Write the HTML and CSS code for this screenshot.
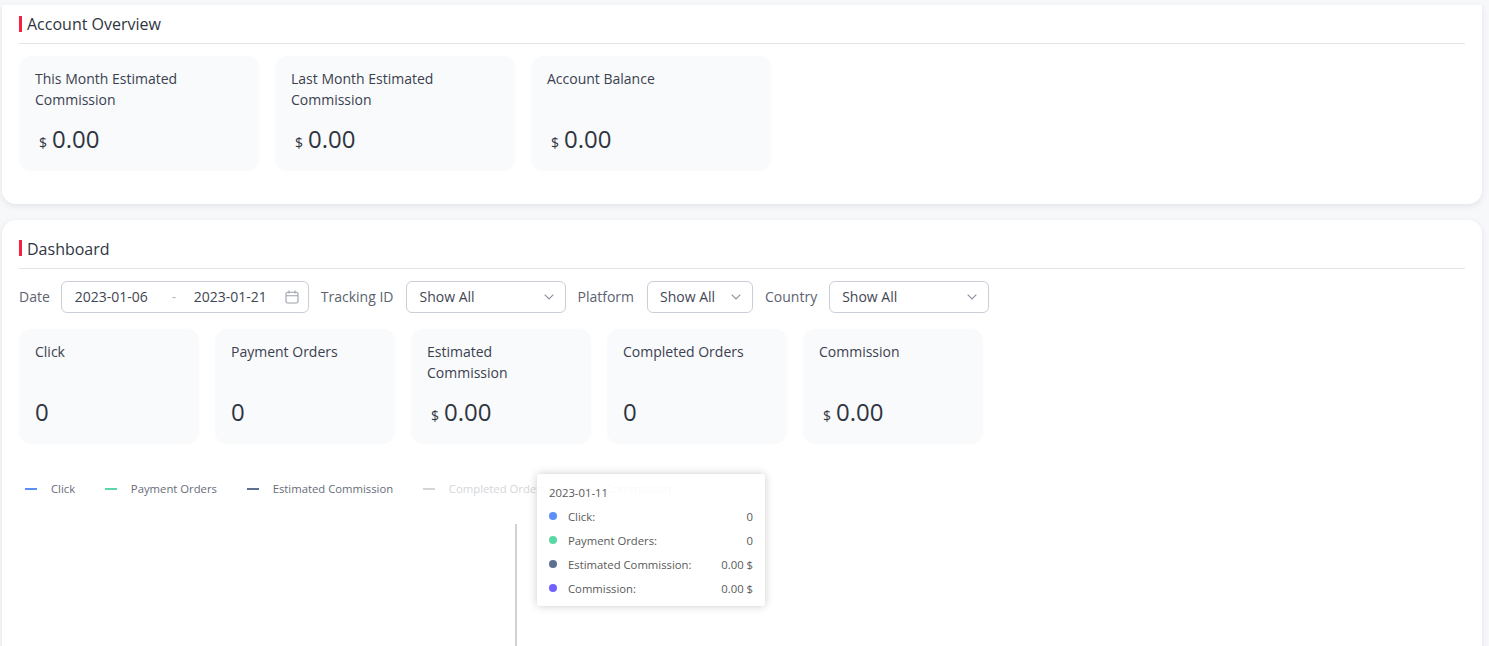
FILE: index.html
```html
<!DOCTYPE html>
<html lang="en">
<head>
<meta charset="utf-8">
<title>Dashboard</title>
<link rel="stylesheet" href="styles.css">
</head>
<body>
<main class="page">
  <section class="panel panel-overview">
    <h2 class="panel-title">Account Overview</h2>
    <div class="stats">
      <div class="stat stat-wide"><div class="stat-label">This Month Estimated Commission</div><div class="stat-value"><span class="cur">$</span>0.00</div></div>
      <div class="stat stat-wide"><div class="stat-label">Last Month Estimated Commission</div><div class="stat-value"><span class="cur">$</span>0.00</div></div>
      <div class="stat stat-wide"><div class="stat-label">Account Balance</div><div class="stat-value"><span class="cur">$</span>0.00</div></div>
    </div>
  </section>

  <section class="panel panel-dashboard">
    <h2 class="panel-title">Dashboard</h2>
    <div class="filters">
      <span class="filter-label filter-label-date">Date</span>
      <div class="field field-date">
        <span class="date-text">2023-01-06</span>
        <span class="date-sep">-</span>
        <span class="date-text">2023-01-21</span>
        <svg class="cal" width="14" height="14" viewBox="0 0 14 14" fill="none" stroke="#9aa1ad" stroke-width="1.1"><rect x="1" y="2.2" width="12" height="10.8" rx="1.6"/><path d="M1 5.8h12M4 .6v3M10 .6v3"/></svg>
      </div>
      <span class="filter-label">Tracking ID</span>
      <div class="field field-select field-w160 field-tracking"><span>Show All</span><svg class="chev" width="10" height="6" viewBox="0 0 10 6" fill="none" stroke="#8a919c" stroke-width="1.1"><path d="M.7.7 5 5l4.3-4.3"/></svg></div>
      <span class="filter-label filter-label-platform">Platform</span>
      <div class="field field-select field-w106"><span>Show All</span><svg class="chev" width="10" height="6" viewBox="0 0 10 6" fill="none" stroke="#8a919c" stroke-width="1.1"><path d="M.7.7 5 5l4.3-4.3"/></svg></div>
      <span class="filter-label">Country</span>
      <div class="field field-select field-w160"><span>Show All</span><svg class="chev" width="10" height="6" viewBox="0 0 10 6" fill="none" stroke="#8a919c" stroke-width="1.1"><path d="M.7.7 5 5l4.3-4.3"/></svg></div>
    </div>
    <div class="stats">
      <div class="stat stat-narrow"><div class="stat-label">Click</div><div class="stat-value">0</div></div>
      <div class="stat stat-narrow"><div class="stat-label">Payment Orders</div><div class="stat-value">0</div></div>
      <div class="stat stat-narrow"><div class="stat-label">Estimated Commission</div><div class="stat-value"><span class="cur">$</span>0.00</div></div>
      <div class="stat stat-narrow"><div class="stat-label">Completed Orders</div><div class="stat-value">0</div></div>
      <div class="stat stat-narrow"><div class="stat-label">Commission</div><div class="stat-value"><span class="cur">$</span>0.00</div></div>
    </div>

    <div class="chart">
      <ul class="legend">
        <li class="legend-item"><i class="mark mark-blue"></i>Click</li>
        <li class="legend-item"><i class="mark mark-green"></i>Payment Orders</li>
        <li class="legend-item"><i class="mark mark-slate"></i>Estimated Commission</li>
        <li class="legend-item legend-off"><i class="mark mark-off"></i>Completed Orders</li>
        <li class="legend-item legend-off legend-last"><i class="mark mark-off"></i>Commission</li>
      </ul>
      <div class="axis-pointer"></div>
      <div class="tooltip">
        <div class="tip-date">2023-01-11</div>
        <div class="tip-row"><i class="dot dot-blue"></i><span class="tip-name">Click:</span><span class="tip-val">0</span></div>
        <div class="tip-row"><i class="dot dot-green"></i><span class="tip-name">Payment Orders:</span><span class="tip-val">0</span></div>
        <div class="tip-row"><i class="dot dot-slate"></i><span class="tip-name">Estimated Commission:</span><span class="tip-val">0.00 $</span></div>
        <div class="tip-row"><i class="dot dot-violet"></i><span class="tip-name">Commission:</span><span class="tip-val">0.00 $</span></div>
      </div>
    </div>
  </section>
</main>
</body>
</html>
```
FILE: styles.css
```css
* { box-sizing: border-box; }
html, body { margin: 0; height: 646px; overflow: hidden; }
body {
  background: #f7f8fa;
  font-family: "Open Sans", "Liberation Sans", sans-serif;
  color: #2f3542;
}
.page {
  display: flex;
  flex-direction: column;
  gap: 16px;
  padding: 5px 7px 0 2px;
}
.panel {
  background: #fff;
  border-radius: 14px;
  box-shadow: 0 2px 6px rgba(40, 50, 70, .10);
  padding: 0 17px;
}
.panel-overview {
  height: 199px;
  border-radius: 0 0 14px 14px;
  padding-top: 8px;
}
.panel-dashboard {
  height: 460px;
  padding-top: 18px;
}
.panel-title {
  position: relative;
  margin: 0;
  padding: 0 0 8px 8px;
  border-bottom: 1px solid #e4e5e8;
  font-size: 16px;
  font-weight: 400;
  line-height: 22px;
}
.panel-title::before {
  content: "";
  position: absolute;
  left: 0;
  top: 3px;
  width: 3px;
  height: 16px;
  background: #f5223f;
}
.panel-dashboard .panel-title::before { top: 2px; }
.stats {
  display: flex;
  gap: 16px;
  margin-top: 12px;
}
.panel-dashboard .stats { margin-top: 16px; }
.stat {
  height: 115px;
  padding: 12px 16px 0;
  background: #f9fafb;
  border-radius: 12px;
}
.stat-wide { width: 240px; }
.stat-narrow { width: 180px; }
.stat-label {
  height: 42px;
  font-size: 14px;
  line-height: 21px;
  color: #3a4150;
}
.stat-value {
  margin-top: 12px;
  font-size: 24px;
  line-height: 34px;
}
.cur {
  margin: 0 5px 0 4px;
  font-size: 14px;
}
.filters {
  display: flex;
  align-items: center;
  margin-top: 12px;
  font-size: 14px;
  line-height: 18px;
  color: #5b6370;
}
.filter-label { margin-right: 12px; }
.filter-label-date { margin-right: 11px; }
.filter-label-platform { margin-right: 13px; }
.field {
  display: flex;
  align-items: center;
  height: 32px;
  margin-right: 12px;
  padding: 0 12px;
  border: 1px solid #c9ced8;
  border-radius: 6px;
  color: #3f4653;
}
.field-date { width: 248px; padding: 0 9px 0 13px; }
.date-text { width: 73px; white-space: nowrap; }
.date-sep { width: 46px; padding-left: 24px; color: #b4b9c2; }
.cal { margin-left: auto; flex: none; }
.field-select { justify-content: space-between; padding-right: 11px; }
.field-tracking { padding-left: 13px; }
.field-w160 { width: 160px; }
.field-w106 { width: 106px; }
.chart {
  position: relative;
  height: 220px;
}
.legend {
  display: flex;
  gap: 29.7px;
  margin: 0;
  padding: 36px 0 0 6px;
  list-style: none;
  font-size: 11.3px;
  line-height: 18px;
  color: #666d79;
  white-space: nowrap;
}
.legend-item { display: flex; align-items: center; }
.legend-off { color: #d4d6da; }
.legend-last { margin-left: 4px; }
.mark {
  width: 12px;
  height: 2px;
  margin-right: 14px;
}
.mark-blue { background: #5b8ff9; }
.mark-green { background: #5ad8a6; }
.mark-slate { background: #5d7092; }
.mark-off { background: #d4d6da; }
.axis-pointer {
  position: absolute;
  left: 496px;
  top: 80px;
  width: 2px;
  height: 140px;
  background: #d2d2d2;
}
.tooltip {
  position: absolute;
  left: 518px;
  top: 30px;
  width: 228px;
  height: 132px;
  padding: 10px 12px 0;
  background: rgba(255, 255, 255, .85);
  border-radius: 3px;
  box-shadow: 0 0 10px rgba(0, 0, 0, .2);
  font-size: 11.3px;
  color: #595959;
}
.tip-date { line-height: 18px; margin-bottom: 2px; }
.tip-row {
  display: flex;
  align-items: center;
  height: 24px;
}
.dot {
  width: 8px;
  height: 8px;
  margin-right: 11px;
  border-radius: 50%;
}
.dot-blue { background: #5b8ff9; }
.dot-green { background: #5ad8a6; }
.dot-slate { background: #5d7092; }
.dot-violet { background: #7262fd; }
.tip-val { margin-left: auto; }
```
